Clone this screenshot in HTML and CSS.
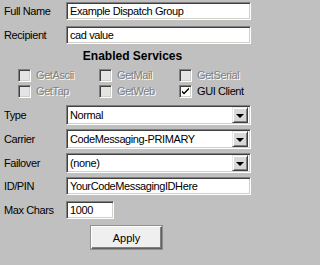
FILE: index.html
```html
<!DOCTYPE html>
<html>
<head>
<meta charset="utf-8">
<link rel="stylesheet" href="styles.css">
</head>
<body>
<div class="form">
  <div class="row">
    <span class="lbl">Full Name</span>
    <div class="field wide">Example Dispatch Group</div>
  </div>
  <div class="row">
    <span class="lbl">Recipient</span>
    <div class="field wide">cad value</div>
  </div>

  <div class="section-title">Enabled Services</div>
  <div class="services">
    <div class="svc disabled"><span class="cb"></span><span class="svc-lbl">GetAscii</span></div>
    <div class="svc disabled"><span class="cb"></span><span class="svc-lbl">GetMail</span></div>
    <div class="svc disabled"><span class="cb"></span><span class="svc-lbl">GetSerial</span></div>
    <div class="svc disabled"><span class="cb"></span><span class="svc-lbl">GetTap</span></div>
    <div class="svc disabled"><span class="cb"></span><span class="svc-lbl">GetWeb</span></div>
    <div class="svc"><span class="cb on"><svg width="9" height="9" viewBox="0 0 9 9"><path d="M1 3.5 L3 5.5 L8 0.5 L8 2.5 L3 7.5 L1 5.5 Z" fill="#000"/></svg></span><span class="svc-lbl">GUI Client</span></div>
  </div>

  <div class="combos">
    <div class="row combo-row">
      <span class="lbl">Type</span>
      <div class="combo"><span class="combo-text">Normal</span><span class="combo-btn"><span class="arrow"></span></span></div>
    </div>
    <div class="row combo-row">
      <span class="lbl">Carrier</span>
      <div class="combo"><span class="combo-text">CodeMessaging-PRIMARY</span><span class="combo-btn"><span class="arrow"></span></span></div>
    </div>
    <div class="row combo-row">
      <span class="lbl">Failover</span>
      <div class="combo"><span class="combo-text">(none)</span><span class="combo-btn"><span class="arrow"></span></span></div>
    </div>
  </div>

  <div class="row id-row">
    <span class="lbl">ID/PIN</span>
    <div class="field wide">YourCodeMessagingIDHere</div>
  </div>
  <div class="row">
    <span class="lbl">Max Chars</span>
    <div class="field short">1000</div>
  </div>

  <div class="actions">
    <button class="btn">Apply</button>
  </div>
</div>
</body>
</html>
```

FILE: styles.css
```css
html, body {
  margin: 0;
  padding: 0;
  background: #c0c0c0;
}

body {
  font-family: "Liberation Sans", Arial, sans-serif;
  font-size: 11px;
  letter-spacing: -0.4px;
  color: #000;
  width: 257px;
  height: 265px;
  overflow: hidden;
}

.form {
  padding: 2px 6px 0 4px;
}

.row {
  display: flex;
  align-items: center;
  height: 18px;
  margin-bottom: 6px;
}

.lbl {
  width: 62px;
  flex: none;
}

.field {
  box-sizing: border-box;
  height: 18px;
  background: #fff;
  border: 1px solid;
  border-color: #808080 #fff #fff #808080;
  box-shadow: inset 1px 1px #404040, inset -1px -1px #d4d0c8;
  padding: 0 3px;
  line-height: 16px;
  white-space: nowrap;
  overflow: hidden;
}

.wide {
  width: 185px;
}

.short {
  width: 48px;
}

.section-title {
  margin-top: -2px;
  height: 16px;
  line-height: 16px;
  font-weight: bold;
  font-size: 12px;
  letter-spacing: 0;
  text-align: center;
  padding-left: 10px;
}

.services {
  margin-top: 3px;
  padding-left: 14px;
  display: grid;
  grid-template-columns: 81px 80px auto;
  grid-auto-rows: 16px;
}

.svc {
  display: flex;
  align-items: center;
  gap: 5px;
}

.cb {
  box-sizing: border-box;
  width: 13px;
  height: 13px;
  flex: none;
  border: 1px solid;
  border-color: #808080 #fff #fff #808080;
  box-shadow: inset 1px 1px #404040, inset -1px -1px #d4d0c8;
  background: #fff;
  display: flex;
  align-items: center;
  justify-content: center;
}

.svc.disabled .cb {
  background: #e4e4e4;
}

.svc.disabled .svc-lbl {
  color: #808080;
  text-shadow: 1px 1px 0 #fff;
}

.combos {
  margin-top: 6px;
}

.combo-row {
  height: 20px;
  margin-bottom: 4px;
}

.combo {
  box-sizing: border-box;
  width: 185px;
  height: 20px;
  background: #fff;
  border: 1px solid;
  border-color: #808080 #fff #fff #808080;
  box-shadow: inset 1px 1px #404040, inset -1px -1px #d4d0c8;
  display: flex;
  align-items: center;
  padding: 2px 2px 2px 3px;
}

.combo-text {
  flex: 1;
  white-space: nowrap;
  overflow: hidden;
}

.combo-btn {
  box-sizing: border-box;
  width: 16px;
  height: 16px;
  flex: none;
  background: #d8d8d8;
  border: 1px solid;
  border-color: #e8e8e8 #404040 #404040 #e8e8e8;
  box-shadow: inset 1px 1px #fff, inset -1px -1px #808080;
  display: flex;
  align-items: center;
  justify-content: center;
}

.arrow {
  width: 0;
  height: 0;
  border-left: 4px solid transparent;
  border-right: 4px solid transparent;
  border-top: 4px solid #000;
  margin-top: 1px;
}

.id-row {
  margin-top: 4px;
}

.actions {
  padding-left: 87px;
  margin-top: 7px;
}

.btn {
  box-sizing: border-box;
  width: 71px;
  height: 23px;
  background: #efefef;
  font-family: "Liberation Sans", Arial, sans-serif;
  font-size: 11px;
  letter-spacing: 0;
  color: #000;
  border: 1px solid;
  border-color: #fff #606060 #606060 #fff;
  box-shadow: inset -1px -1px #808080, 0 0 0 1px #909090;
  padding: 0;
}
```
